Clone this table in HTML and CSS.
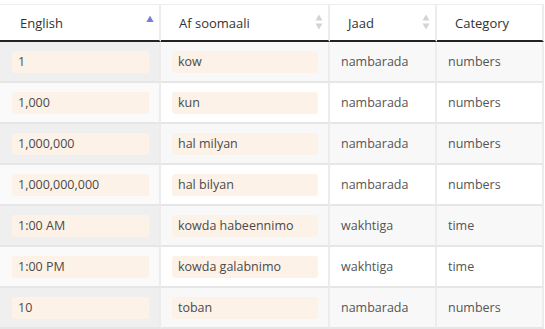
FILE: index.html
```html
<!DOCTYPE html>
<html>
<head>
<meta charset="utf-8">
<link rel="stylesheet" href="styles.css">
</head>
<body>
<div class="wrap">
<table class="grid">
  <colgroup>
    <col class="c1"><col class="c2"><col class="c3"><col class="c4">
  </colgroup>
  <thead>
    <tr>
      <th class="sortable sorted">English<span class="sort"><svg width="8" height="16" viewBox="0 0 8 16"><path d="M4 1.5 L7.6 8 L0.4 8 Z" fill="#7b7be0"/></svg></span></th>
      <th class="sortable">Af soomaali<span class="sort"><svg width="8" height="16" viewBox="0 0 8 16"><path d="M4 0.5 L7.5 6.5 L0.5 6.5 Z" fill="#d4d4d4"/><path d="M4 15.5 L7.5 9.5 L0.5 9.5 Z" fill="#d4d4d4"/></svg></span></th>
      <th class="sortable">Jaad<span class="sort"><svg width="8" height="16" viewBox="0 0 8 16"><path d="M4 0.5 L7.5 6.5 L0.5 6.5 Z" fill="#d4d4d4"/><path d="M4 15.5 L7.5 9.5 L0.5 9.5 Z" fill="#d4d4d4"/></svg></span></th>
      <th>Category</th>
    </tr>
  </thead>
  <tbody>
    <tr class="odd"><td class="s"><div class="box">1</div></td><td><div class="box">kow</div></td><td>nambarada</td><td>numbers</td></tr>
    <tr><td class="s"><div class="box">1,000</div></td><td><div class="box">kun</div></td><td>nambarada</td><td>numbers</td></tr>
    <tr class="odd"><td class="s"><div class="box">1,000,000</div></td><td><div class="box">hal milyan</div></td><td>nambarada</td><td>numbers</td></tr>
    <tr><td class="s"><div class="box">1,000,000,000</div></td><td><div class="box">hal bilyan</div></td><td>nambarada</td><td>numbers</td></tr>
    <tr class="odd"><td class="s"><div class="box">1:00 AM</div></td><td><div class="box">kowda habeennimo</div></td><td>wakhtiga</td><td>time</td></tr>
    <tr><td class="s"><div class="box">1:00 PM</div></td><td><div class="box">kowda galabnimo</div></td><td>wakhtiga</td><td>time</td></tr>
    <tr class="odd"><td class="s"><div class="box">10</div></td><td><div class="box">toban</div></td><td>nambarada</td><td>numbers</td></tr>
  </tbody>
</table>
</div>
</body>
</html>
```

FILE: styles.css
```css
html, body {
  margin: 0;
  padding: 0;
  background: #ffffff;
}
body {
  font-family: "Open Sans", "Noto Sans", sans-serif;
  font-size: 12.5px;
  color: #555555;
}
.wrap {
  padding-top: 4px;
}
.grid {
  width: 544px;
  table-layout: fixed;
  border-collapse: separate;
  border-spacing: 0;
}
.c1 { width: 161px; }
.c2 { width: 169px; }
.c3 { width: 107px; }
.c4 { width: 107px; }
.grid th {
  box-sizing: border-box;
  height: 38px;
  padding: 0 8px 0 18px;
  text-align: left;
  font-weight: normal;
  font-size: 13px;
  color: #333333;
  border-top: 1px solid #ededed;
  border-right: 2px solid #ececec;
  border-bottom: 2px solid #222222;
  position: relative;
}
.grid th:first-child {
  padding-left: 20px;
}
.grid th .sort {
  position: absolute;
  right: 5px;
  top: 9px;
  line-height: 0;
}
.grid td {
  box-sizing: border-box;
  height: 41px;
  padding: 0 10px 0 11px;
  border-right: 2px solid #ececec;
  border-bottom: 2px solid #e6e6e6;
  background: #ffffff;
  vertical-align: middle;
  white-space: nowrap;
}
.grid td:first-child {
  padding-left: 12px;
}
.grid tr.odd td {
  background: #f8f8f8;
}
.grid tr.odd td.s {
  background: #efefef;
}
.grid td.s {
  background: #fafafa;
}
.box {
  height: 22px;
  line-height: 22px;
  padding: 0 6px;
  background: #fdf2e7;
  border-radius: 3px;
  color: #4a4a4a;
}
```
